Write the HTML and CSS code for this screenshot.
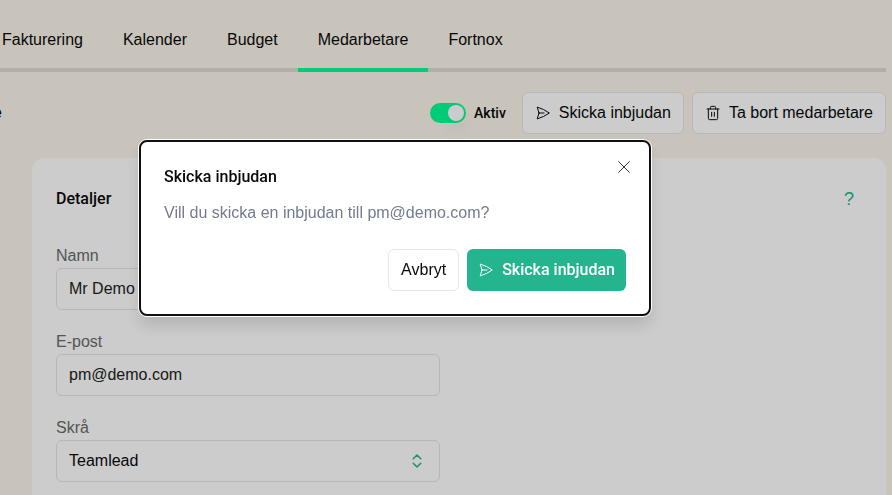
FILE: index.html
```html
<!DOCTYPE html>
<html lang="sv">
<head>
    <meta charset="UTF-8">
    <meta name="viewport" content="width=device-width, initial-scale=1.0">
    <title>Medarbetare</title>
    <link rel="stylesheet" href="styles.css">
</head>
<body>
    <div class="page">
        <nav class="tabs">
            <a class="tab" href="#fakturering">Fakturering</a>
            <a class="tab" href="#kalender">Kalender</a>
            <a class="tab" href="#budget">Budget</a>
            <a class="tab active" href="#medarbetare">Medarbetare</a>
            <a class="tab" href="#fortnox">Fortnox</a>
        </nav>

        <div class="toolbar">
            <span class="crumb">e</span>
            <div class="toggle">
                <input type="checkbox" role="switch" id="active" class="switch" checked>
                <label for="active">Aktiv</label>
            </div>
            <div class="toolbar-buttons">
                <button type="button" class="btn">
                    <svg class="icon" viewBox="0 0 24 24"><path d="M6 12 3.27 3.13A59.77 59.77 0 0 1 21.49 12 59.77 59.77 0 0 1 3.27 20.88L6 12Zm0 0h7.5"/></svg>
                    Skicka inbjudan
                </button>
                <button type="button" class="btn">
                    <svg class="icon" viewBox="0 0 24 24"><path d="M3 6h18M19 6v14a2 2 0 0 1-2 2H7a2 2 0 0 1-2-2V6M8 6V4a2 2 0 0 1 2-2h4a2 2 0 0 1 2 2v2M10 11v6M14 11v6"/></svg>
                    Ta bort medarbetare
                </button>
            </div>
        </div>

        <section class="card">
            <div class="card-header">
                <h2>Detaljer</h2>
                <button type="button" class="help">?</button>
            </div>
            <form class="details">
                <div class="field">
                    <label for="name">Namn</label>
                    <input type="text" id="name" name="name" value="Mr Demo">
                </div>
                <div class="field">
                    <label for="email">E-post</label>
                    <input type="email" id="email" name="email" value="pm@demo.com">
                </div>
                <div class="field">
                    <label for="role">Skrå</label>
                    <div class="select-wrap">
                        <select id="role" name="role">
                            <option>Teamlead</option>
                        </select>
                        <svg class="select-icon" viewBox="0 0 24 24"><path d="m7 15 5 5 5-5M7 9l5-5 5 5"/></svg>
                    </div>
                </div>
            </form>
        </section>
    </div>

    <div class="overlay">
        <div class="dialog" role="dialog" aria-modal="true" aria-labelledby="dialog-title">
            <h2 id="dialog-title">Skicka inbjudan</h2>
            <p>Vill du skicka en inbjudan till pm@demo.com?</p>
            <div class="dialog-buttons">
                <button type="button" class="btn">Avbryt</button>
                <button type="button" class="btn primary">
                    <svg class="icon" viewBox="0 0 24 24"><path d="M6 12 3.27 3.13A59.77 59.77 0 0 1 21.49 12 59.77 59.77 0 0 1 3.27 20.88L6 12Zm0 0h7.5"/></svg>
                    Skicka inbjudan
                </button>
            </div>
            <button type="button" class="close" aria-label="Stäng">
                <svg viewBox="0 0 24 24"><path d="M4 4l16 16M20 4L4 20"/></svg>
            </button>
        </div>
    </div>
</body>
</html>
```
FILE: styles.css
```css
* {
    box-sizing: border-box;
}
body {
    margin: 0;
    background-color: #faf5ea;
    color: #0a0a0a;
    font-family: "Liberation Sans", Arial, sans-serif;
    font-size: 16px;
    line-height: 24px;
}
h2 {
    margin: 0;
    font-family: Roboto, sans-serif;
    font-size: 16px;
    font-weight: 500;
}
button,
input,
select {
    font: inherit;
    color: inherit;
}
button {
    cursor: pointer;
}
svg {
    fill: none;
    stroke: currentColor;
    stroke-width: 1.5;
    stroke-linecap: round;
    stroke-linejoin: round;
}
.page {
    display: flex;
    flex-direction: column;
    min-height: 100vh;
    padding-right: 6px;
}

/* Tabs */
.tabs {
    display: flex;
    padding-top: 8px;
    box-shadow: inset 0 -4px #e0dbd1;
}
.tab {
    padding: 20px 20px 16px;
    border-bottom: 4px solid transparent;
    color: inherit;
    text-decoration: none;
}
.tab:first-child {
    padding-left: 2px;
}
.tab.active {
    border-bottom-color: #00ff95;
}

/* Toolbar */
.toolbar {
    display: flex;
    align-items: center;
    gap: 16px;
    margin: 20px 0 24px;
}
.crumb {
    display: flex;
    justify-content: flex-end;
    width: 2px;
    margin-right: auto;
    overflow: hidden;
}
.toggle {
    display: flex;
    align-items: center;
    gap: 8px;
    font-family: Roboto, sans-serif;
    font-size: 14px;
    font-weight: 500;
}
.switch {
    display: flex;
    justify-content: flex-end;
    appearance: none;
    width: 36px;
    height: 20px;
    margin: 0;
    padding: 2px;
    border-radius: 10px;
    background-color: #00ff95;
}
.switch::before {
    content: "";
    width: 16px;
    height: 16px;
    border-radius: 50%;
    background-color: #fff;
    box-shadow: 0 10px 15px rgba(0, 0, 0, 0.05);
}
.toolbar-buttons {
    display: flex;
    gap: 8px;
}
.btn {
    display: flex;
    align-items: center;
    gap: 8px;
    height: 42px;
    padding: 0 12px;
    border: 1px solid #e5e7eb;
    border-radius: 6px;
    background-color: #fff;
    white-space: nowrap;
}
.btn.primary {
    padding: 0 11px;
    border: none;
    background-color: #24b48e;
    color: #fff;
    font-family: Roboto, sans-serif;
    font-weight: 500;
}
.icon {
    width: 16px;
    height: 16px;
}

/* Details card */
.card {
    flex: 1;
    margin-left: 32px;
    padding: 24px 24px 0;
    border-radius: 12px 12px 0 0;
    background-color: #fff;
}
.card-header {
    display: flex;
    align-items: center;
    justify-content: space-between;
    height: 34px;
    margin-bottom: 28px;
}
.help {
    width: 26px;
    padding: 0;
    border: none;
    background: none;
    color: #24b48e;
    font-size: 18px;
}
.details {
    display: flex;
    flex-direction: column;
    gap: 20px;
    max-width: 384px;
}
.field label {
    display: block;
    color: #6b6b6b;
}
.field input,
.field select {
    display: block;
    width: 100%;
    height: 42px;
    padding: 0 12px;
    border: 1px solid #e5e5e5;
    border-radius: 6px;
    background-color: #fff;
    color: #222;
}
.field select {
    appearance: none;
    color: #0a0a0a;
}
.select-wrap {
    position: relative;
}
.select-icon {
    position: absolute;
    top: 12px;
    right: 14px;
    width: 18px;
    height: 18px;
    color: #24b48e;
    stroke-width: 2;
    pointer-events: none;
}

/* Dialog */
.overlay {
    position: fixed;
    inset: 0;
    background-color: rgba(0, 0, 0, 0.2);
}
.dialog {
    position: absolute;
    top: 140px;
    left: 139px;
    width: 100%;
    max-width: 512px;
    padding: 23px;
    border: 2px solid #101010;
    border-radius: 8px;
    background-color: #fff;
    box-shadow: 0 0 0 1px #fff, 0 10px 16px rgba(0, 0, 0, 0.12);
}
.dialog p {
    margin: 12px 0 24px;
    color: #737b8c;
}
.dialog-buttons {
    display: flex;
    justify-content: flex-end;
    gap: 8px;
}
.close {
    position: absolute;
    top: 17px;
    right: 17px;
    display: flex;
    padding: 0;
    border: none;
    background: none;
    color: #333;
}
.close svg {
    width: 16px;
    height: 16px;
}
```
